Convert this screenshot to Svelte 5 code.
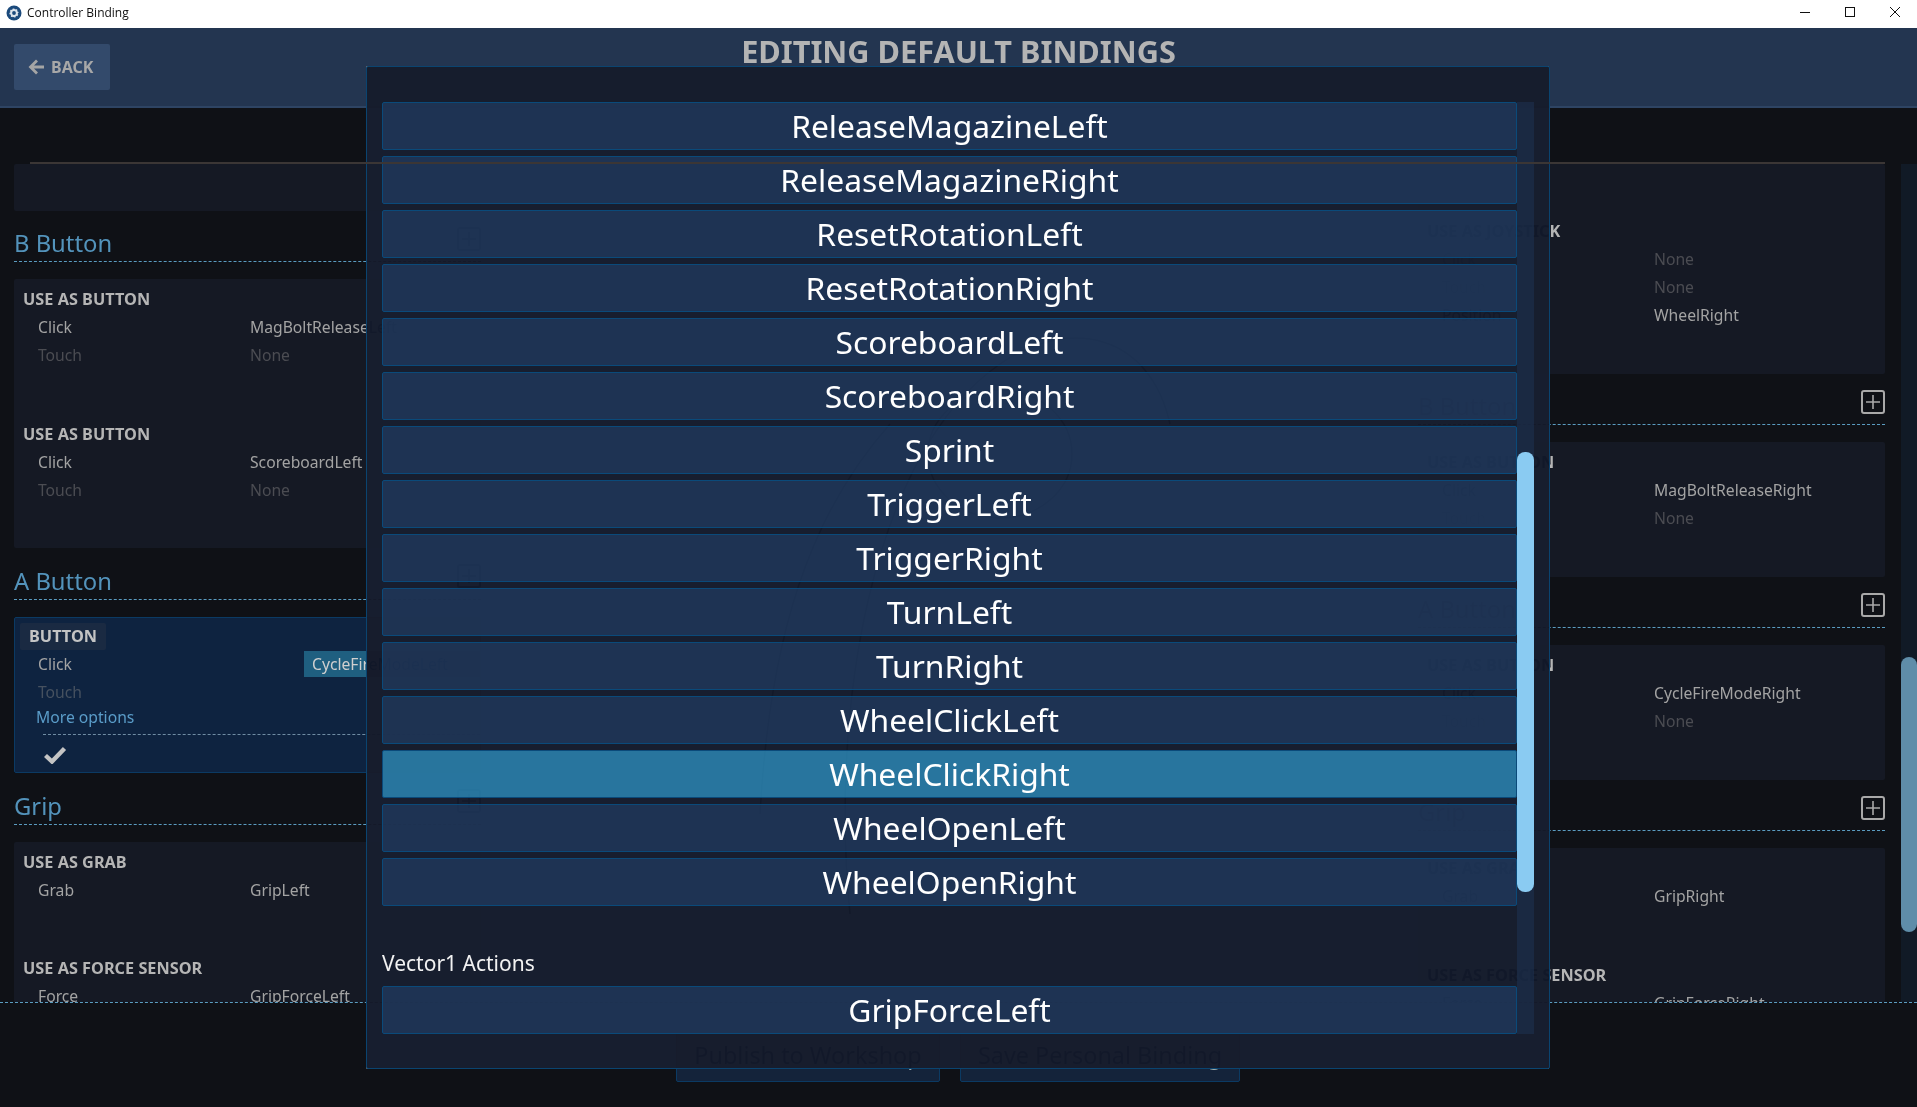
<script>
  const actions = ['ReleaseMagazineLeft','ReleaseMagazineRight','ResetRotationLeft','ResetRotationRight','ScoreboardLeft','ScoreboardRight','Sprint','TriggerLeft','TriggerRight','TurnLeft','TurnRight','WheelClickLeft','WheelClickRight','WheelOpenLeft','WheelOpenRight'];
  const bButton = [
    { title: 'USE AS BUTTON', rows: [['Click','MagBoltReleaseLeft'],['Touch','None']] },
    { title: 'USE AS BUTTON', rows: [['Click','ScoreboardLeft'],['Touch','None']] }
  ];
  const grip = [
    { title: 'USE AS GRAB', rows: [['Grab','GripLeft']] },
    { title: 'USE AS FORCE SENSOR', rows: [['Force','GripForceLeft']] }
  ];
  const right = [
    { name: 'B Button', groups: [{ title: 'USE AS BUTTON', rows: [['Click','MagBoltReleaseRight'],['Touch','None']] }] },
    { name: 'A Button', groups: [{ title: 'USE AS BUTTON', rows: [['Click','CycleFireModeRight'],['Touch','None']] }] },
    { name: 'Grip', groups: [{ title: 'USE AS GRAB', rows: [['Grab','GripRight']] }, { title: 'USE AS FORCE SENSOR', rows: [['Force','GripForceRight']] }] }
  ];
</script>

{#snippet group(g)}
  <div class="group">
    <div class="gtitle">{g.title}</div>
    {#each g.rows as r}
      <div class="brow"><span class:dim={r[1] === 'None'}>{r[0]}</span><span class:dim={r[1] === 'None'}>{r[1]}</span></div>
    {/each}
  </div>
{/snippet}

{#snippet plus()}
  <svg class="plus" viewBox="0 0 24 24" width="24" height="24"><rect x="1" y="1" width="22" height="22" rx="2" fill="none" stroke="#a9a9a9" stroke-width="2"/><path d="M5 12h14M12 5v14" stroke="#a9a9a9" stroke-width="1.6"/></svg>
{/snippet}

{#snippet head(name)}
  <div class="shead"><span>{name}</span>{@render plus()}</div>
{/snippet}

<div class="app">
  <div class="titlebar">
    <svg class="logo" viewBox="0 0 16 16" width="16" height="16"><circle cx="8" cy="8" r="7.5" fill="#1b4a7c"/><circle cx="8" cy="8" r="4.6" fill="#dbe3ec"/><circle cx="8" cy="8" r="4.6" fill="none" stroke="#1b4a7c" stroke-width="1.4" stroke-dasharray="1.6 2"/><circle cx="8" cy="8" r="1.9" fill="#1b4a7c"/></svg>
    <span class="wtitle">Controller Binding</span>
    <div class="wctl">
      <svg viewBox="0 0 10 10" width="10" height="10"><path d="M0 5.5h10" stroke="#111" stroke-width="1"/></svg>
      <svg viewBox="0 0 10 10" width="10" height="10"><rect x=".5" y=".5" width="9" height="9" fill="none" stroke="#111"/></svg>
      <svg viewBox="0 0 10 10" width="10" height="10"><path d="M0 0l10 10M10 0L0 10" stroke="#111" stroke-width="1"/></svg>
    </div>
  </div>

  <header class="top">
    <button class="back">
      <svg viewBox="0 0 16 16" width="16" height="16"><path d="M16 8H2.5M9 1.5L2.5 8l6.5 6.5" fill="none" stroke="#a5a5a5" stroke-width="2.8"/></svg>
      BACK
    </button>
    <h1>EDITING DEFAULT BINDINGS</h1>
  </header>

  <main class="body">
    <div class="cols">
      <section class="col">
        <div class="card stub"></div>
        {@render head('B Button')}
        <div class="card">
          {#each bButton as g}{@render group(g)}{/each}
        </div>
        {@render head('A Button')}
        <div class="card active">
          <div class="chip">BUTTON</div>
          <div class="arow"><span>Click</span><span class="val">CycleFireModeLeft</span></div>
          <div class="arow dimrow"><span>Touch</span></div>
          <div class="more">More options</div>
          <div class="confirm">
            <svg viewBox="0 0 24 18" width="24" height="18"><path d="M2.5 9.5l6.5 6L21.5 2.5" fill="none" stroke="#c4c4c4" stroke-width="4.4"/></svg>
          </div>
        </div>
        {@render head('Grip')}
        <div class="card">
          {#each grip as g}{@render group(g)}{/each}
        </div>
      </section>

      <section class="col mid">
        <svg class="pad" viewBox="0 0 500 700" width="500" height="700" fill="none" stroke="#9aa4b4" stroke-width="1.5">
          <path d="M150 700C130 500 170 240 300 150c70-48 150-30 170 60"/>
          <path d="M60 600C70 420 110 300 190 210"/>
          <ellipse cx="300" cy="240" rx="72" ry="64"/>
        </svg>
      </section>

      <section class="col">
        <div class="card lead">
          <div class="group">
            <div class="gtitle">USE AS JOYSTICK</div>
            <div class="brow"><span class="dim">Click</span><span class="dim">None</span></div>
            <div class="brow"><span class="dim">Touch</span><span class="dim">None</span></div>
            <div class="brow"><span>Position</span><span>WheelRight</span></div>
          </div>
        </div>
        {#each right as s}
          {@render head(s.name)}
          <div class="card">
            {#each s.groups as g}{@render group(g)}{/each}
          </div>
        {/each}
      </section>
    </div>
    <div class="sb"><div class="sbthumb"></div></div>
  </main>

  <footer class="foot">
    <button class="fbtn pub">Publish to Workshop</button>
    <button class="fbtn save">Save Personal Binding</button>
  </footer>

  <div class="modal">
    <div class="viewport">
      <div class="list">
        {#each actions as a}
          <div class="action" class:sel={a === 'WheelClickRight'}>{a}</div>
        {/each}
        <div class="vhead">Vector1 Actions</div>
        <div class="action">GripForceLeft</div>
      </div>
      <div class="track"><div class="thumb"></div></div>
    </div>
  </div>
</div>

<style>
  :global(body) { margin: 0; background: #0f1116; }
  .app { position: relative; width: 1917px; height: 1107px; overflow: hidden; display: flex; flex-direction: column; background: #0f1116; font-family: "Noto Sans", sans-serif; color: #a3a3a3; }

  .titlebar { height: 28px; flex: none; background: #fff; display: flex; align-items: center; padding: 0 0 3px 6px; box-sizing: border-box; }
  .wtitle { font-family: "Open Sans", sans-serif; font-size: 12px; color: #111; margin-left: 5px; }
  .wctl { margin-left: auto; display: flex; gap: 35px; padding-right: 17px; margin-top: -1px; }
  .wctl svg { display: block; }

  .top { height: 80px; flex: none; box-sizing: border-box; background: #233550; border-bottom: 2px solid #2e4463; position: relative; display: flex; align-items: flex-start; padding: 16px 14px 0; }
  .back { width: 96px; height: 46px; background: #334a6b; border: 0; border-radius: 2px; color: #a8a8a8; font: 700 16px "Noto Sans", sans-serif; display: flex; align-items: center; gap: 7px; padding: 0 0 0 14px; }
  h1 { position: absolute; left: 0; right: 0; top: 1px; margin: 0; text-align: center; font-size: 30.7px; line-height: 44px; font-weight: 700; color: #b4b4b4; }

  .body { height: 895px; flex: none; box-sizing: border-box; padding: 54px 0 0 14px; border-bottom: 1px dashed #5b9cc0; display: flex; overflow: hidden; gap: 16px; }
  .cols { width: 1871px; flex: none; display: flex; justify-content: space-between; height: 840px; overflow: hidden; position: relative; }
  .cols::before { content: ""; position: absolute; left: 16px; right: -1px; top: 0; height: 2px; background: #3b3635; z-index: 1; }
  .col { width: 467px; flex: none; padding-top: 2px; }
  .mid { width: 900px; display: flex; justify-content: center; }
  .pad { margin-top: 50px; }

  .card { background: #151924; border-radius: 2px; }
  .stub { height: 46.5px; }
  .lead { padding-top: 47px; }
  .shead { height: 51.5px; box-sizing: border-box; border-bottom: 1px dashed #5b9cc0; margin-bottom: 17px; font-size: 23.8px; line-height: 33px; color: #5393bb; display: flex; justify-content: space-between; align-items: flex-start; padding-top: 9px; }
  .shead span { margin-top: 7.5px; }
  .plus { display: block; margin-top: 7px; }
  .group { padding: 6px 0 44.5px 9px; }
  .gtitle { height: 28px; line-height: 28px; font-size: 16.3px; font-weight: 700; color: #b5b5b5; }
  .brow { height: 28px; line-height: 28px; font-size: 15.7px; padding-left: 15px; display: grid; grid-template-columns: 212px auto; justify-content: start; white-space: nowrap; }
  .dim { color: #4b4c52; }

  .active { background: #0e2340; border: 1px solid #0b3a63; height: 156.5px; box-sizing: border-box; padding: 5px 0 0 5px; }
  .chip { width: fit-content; height: 27px; line-height: 27px; box-sizing: border-box; padding: 0 9px; background: #1a2a42; font-size: 16.3px; font-weight: 700; color: #c4c4c4; border-radius: 2px; margin-bottom: 0.5px; }
  .arow { height: 28px; line-height: 28px; font-size: 15.7px; padding-left: 18px; display: flex; justify-content: space-between; white-space: nowrap; }
  .dimrow { color: #46515f; }
  .val { background: #1f5f80; color: #cfcfcf; height: 26px; line-height: 26px; padding: 0 8px; margin-top: 1px; width: 160px; }
  .more { font-size: 15.7px; height: 24px; line-height: 22px; padding-left: 16px; color: #5a9cc8; }
  .confirm { margin: 4px 0 0 23px; border-top: 1px dashed #6f8ca3; padding-top: 11px; }
  .confirm svg { display: block; }

  .sb { width: 16px; flex: none; height: 838px; margin-top: 2px; background: #111a26; margin-left: auto; }
  .sbthumb { width: 16px; height: 275px; margin-top: 493px; background: #5f8da9; border-radius: 8px; }

  .foot { flex: 1; display: flex; gap: 20px; padding: 30px 0 0 676px; }
  .fbtn { height: 49px; background: #14233a; border: 1px solid #0b3a63; border-radius: 2px; color: #9aa; font: 400 23.4px "Noto Sans", sans-serif; padding: 0 0 6px; }
  .pub { width: 264px; }
  .save { width: 280px; }

  .modal { position: absolute; left: 366px; top: 66px; width: 1184px; height: 1003px; box-sizing: border-box; background: rgba(15,23,40,.97); backdrop-filter: invert(1); border: 1px solid #0a4470; border-radius: 2px; padding: 35px 15px 0; }
  .viewport { height: 932px; display: flex; overflow: hidden; }
  .list { width: 1135px; flex: none; display: flex; flex-direction: column; gap: 6px; }
  .action { height: 48px; flex: none; box-sizing: border-box; background: rgba(35,67,109,.6); border: 1px solid #0a4a7a; border-radius: 2px; color: #fff; font-size: 31.8px; line-height: 46px; text-align: center; }
  .sel { background: rgba(52,177,234,.6); }
  .vhead { height: 68px; box-sizing: border-box; padding-top: 37px; color: #f2f2f2; font-size: 21px; line-height: 28px; flex: none; }
  .track { width: 17px; flex: none; background: rgba(32,56,92,.45); }
  .thumb { width: 17px; height: 440px; margin-top: 350px; background: #8acbf2; border-radius: 8px; }
</style>
